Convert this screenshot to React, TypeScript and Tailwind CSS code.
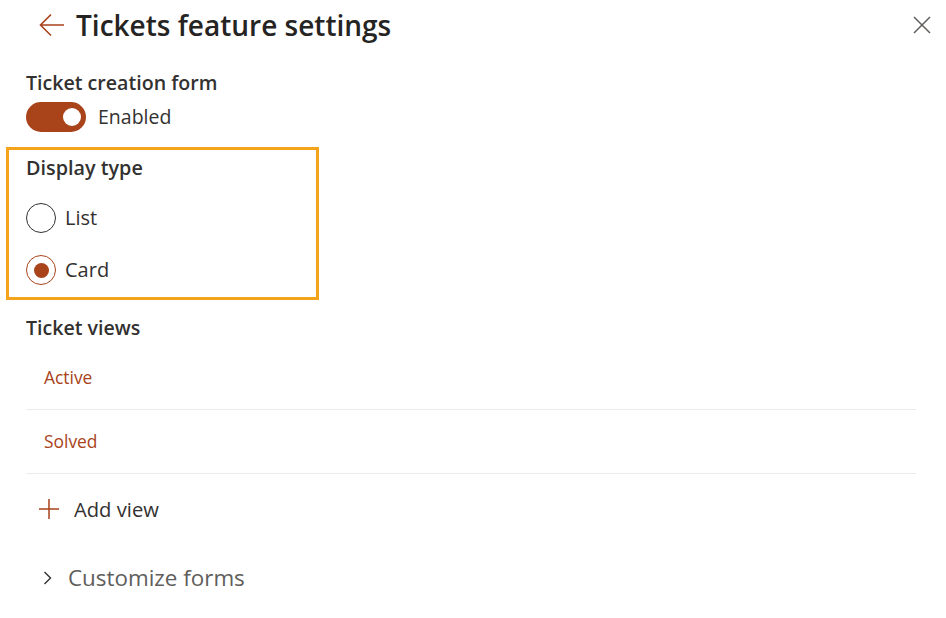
import React from "react";

const brand = "#a8431a";

const BackArrow = () => (
  <svg width="26" height="24" viewBox="0 0 26 24" fill="none">
    <path d="M25 12H2M12 1.5L1.5 12L12 22.5" stroke={brand} strokeWidth="1.6" />
  </svg>
);

const CloseIcon = () => (
  <svg width="18" height="18" viewBox="0 0 18 18" fill="none">
    <path d="M1 1L17 17M17 1L1 17" stroke="#605e5c" strokeWidth="1.5" />
  </svg>
);

const PlusIcon = () => (
  <svg width="20" height="20" viewBox="0 0 20 20" fill="none">
    <path d="M10 0V20M0 10H20" stroke={brand} strokeWidth="1.5" />
  </svg>
);

const Chevron = () => (
  <svg width="9" height="14" viewBox="0 0 9 14" fill="none">
    <path d="M1.5 1L7.5 7L1.5 13" stroke="#323130" strokeWidth="1.4" />
  </svg>
);

const Radio: React.FC<{ label: string; checked?: boolean }> = ({ label, checked }) => (
  <div className="flex items-center h-[30px]">
    <span
      className={
        checked
          ? "w-[30px] h-[30px] rounded-full border border-[#a8431a] flex items-center justify-center"
          : "w-[30px] h-[30px] rounded-full border border-[#323130]"
      }
    >
      {checked && <span className="w-[15px] h-[15px] rounded-full bg-[#a8431a]" />}
    </span>
    <span className="ml-[9px] text-[20px] text-[#323130]">{label}</span>
  </div>
);

export default function App() {
  return (
    <div className="w-[946px] h-[618px] bg-white overflow-hidden font-['Open_Sans',sans-serif] text-[#323130]">
      <div className="flex items-center h-[50px] pl-[39px] pr-[15px]">
        <BackArrow />
        <h1 className="ml-[11px] text-[28px] font-semibold text-[#252423]">Tickets feature settings</h1>
        <div className="ml-auto">
          <CloseIcon />
        </div>
      </div>

      <div className="pl-[26px] pr-[30px]">
        <div className="mt-[20px] h-[26px] flex items-center text-[19.6px] font-semibold">Ticket creation form</div>
        <div className="mt-[6px] h-[30px] flex items-center">
          <span className="relative w-[60px] h-[30px] rounded-full bg-[#a8431a]">
            <span className="absolute right-[5px] top-[6px] w-[18px] h-[18px] rounded-full bg-white" />
          </span>
          <span className="ml-[12px] text-[19.5px]">Enabled</span>
        </div>

        <div className="mt-[15px] ml-[-20px] w-[313px] border-[3px] border-[#f5a31a] pl-[17px] pt-[5px] pb-[12px]">
          <div className="h-[26px] flex items-center text-[19.8px] font-semibold">Display type</div>
          <div className="mt-[22px]">
            <Radio label="List" />
          </div>
          <div className="mt-[22px]">
            <Radio label="Card" checked />
          </div>
        </div>

        <div className="mt-[15px] h-[26px] flex items-center text-[19.6px] font-semibold">Ticket views</div>
        <div className="mt-[5px]">
          <div className="h-[64px] flex items-center pl-[18px] border-b border-[#edebe9] text-[17.4px] text-[#a8431a]">Active</div>
          <div className="h-[64px] flex items-center pl-[18px] border-b border-[#edebe9] text-[17.4px] text-[#a8431a]">Solved</div>
        </div>
        <div className="h-[70px] flex items-center pl-[13px]">
          <PlusIcon />
          <span className="ml-[15px] text-[20.2px]">Add view</span>
        </div>
        <div className="h-[68px] flex items-center pl-[17px]">
          <Chevron />
          <span className="ml-[16px] text-[22.4px] text-[#605e5c]">Customize forms</span>
        </div>
      </div>
    </div>
  );
}
